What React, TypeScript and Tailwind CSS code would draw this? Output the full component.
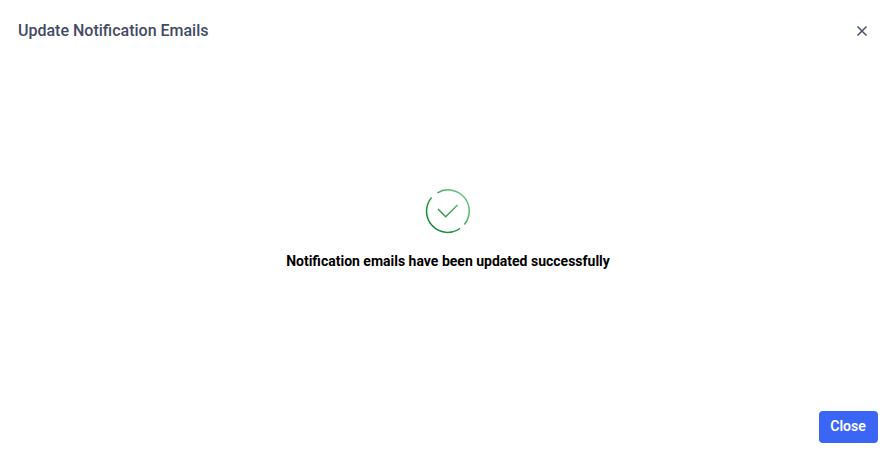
const CheckCircle = () => (
  <svg width="46" height="46" viewBox="0 0 46 46" fill="none">
    <defs>
      <linearGradient id="ring" x1="4" y1="40" x2="42" y2="6" gradientUnits="userSpaceOnUse">
        <stop offset="0" stopColor="#0b8029" />
        <stop offset="1" stopColor="#74c687" />
      </linearGradient>
    </defs>
    <path d="M12.4 4.8 A21.1 21.1 0 0 1 39.4 36.4" stroke="url(#ring)" strokeWidth="1.5" />
    <path d="M35 40.4 A21.1 21.1 0 0 1 6.6 9.6" stroke="url(#ring)" strokeWidth="1.5" />
    <path d="M13 21 L20.7 28.8 L32.5 17" stroke="url(#ring)" strokeWidth="1.5" />
  </svg>
);

export default function App() {
  return (
    <div className="w-[895px] h-[456px] flex flex-col bg-white font-['Roboto',sans-serif] overflow-hidden">
      <div className="flex items-center justify-between pl-[18px] pr-[27px] pt-px h-[60px] shrink-0">
        <h2 className="text-base font-medium text-[#434a65]">Update Notification Emails</h2>
        <svg width="12" height="12" viewBox="0 0 12 12" fill="none">
          <path d="M1.5 1.5 L10.5 10.5 M10.5 1.5 L1.5 10.5" stroke="#46506e" strokeWidth="1.5" />
        </svg>
      </div>
      <div className="flex-1 flex flex-col items-center pt-[128px]">
        <CheckCircle />
        <p className="mt-[17px] pl-px text-sm font-bold leading-5 text-black">
          Notification emails have been updated successfully
        </p>
      </div>
      <div className="flex justify-end pr-[17px] pb-[13px]">
        <button className="w-[59px] h-8 pb-[2px] pr-px rounded bg-[#3b66f5] text-sm font-semibold text-white">Close</button>
      </div>
    </div>
  );
}
